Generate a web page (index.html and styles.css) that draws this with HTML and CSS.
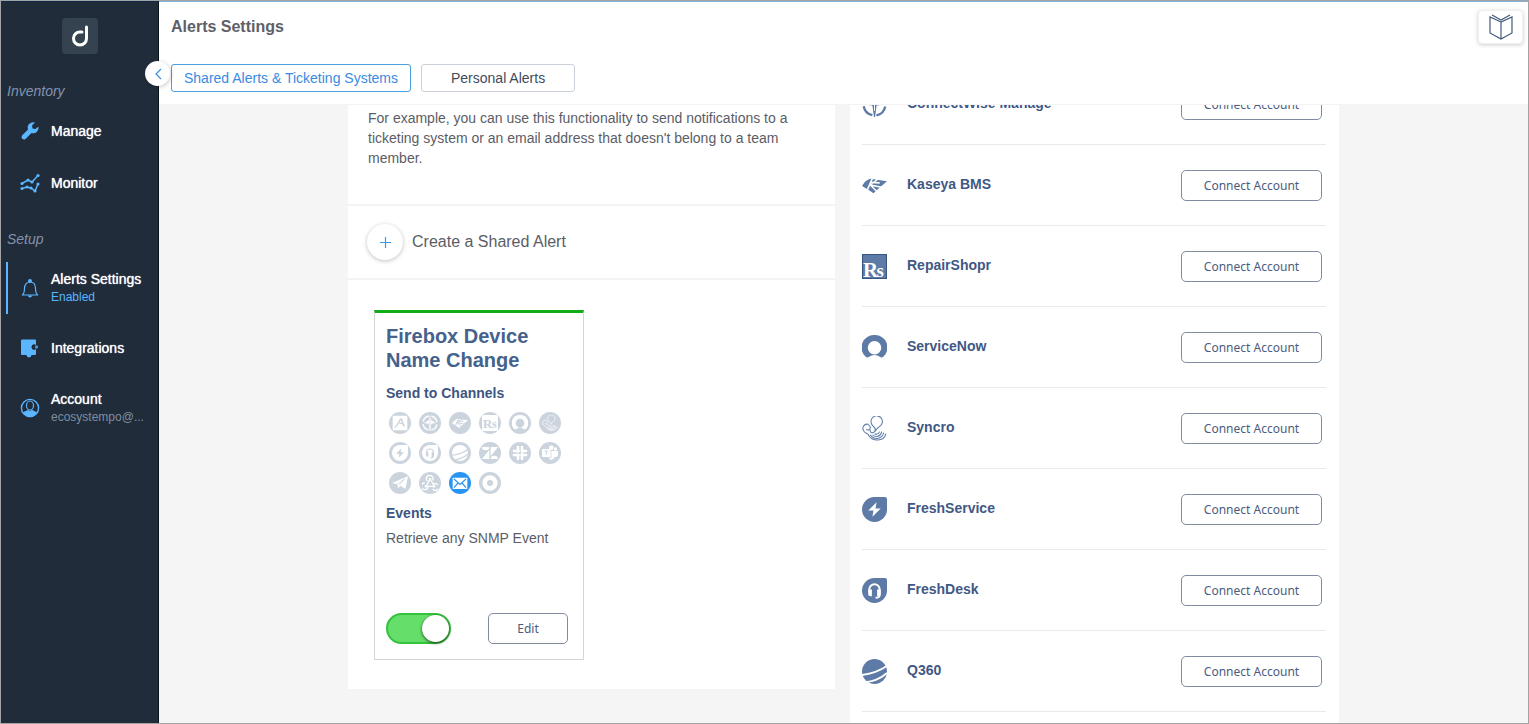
FILE: index.html
```
<!DOCTYPE html>
<html lang="en">
<head>
<meta charset="utf-8">
<title>Alerts Settings</title>
<link rel="stylesheet" href="styles.css">
</head>
<body>
<svg class="sprite" aria-hidden="true">
  <symbol id="autotask" viewBox="0 0 24 24"><rect x="1" y="1" width="22" height="22" rx="2" fill="currentColor"/><path d="M4 18c5 0 6-12 10-12l4 11M11 13c3-2 6 0 8 4" fill="none" stroke="var(--hole)" stroke-width="2"/></symbol>
  <symbol id="connectwise" viewBox="0 0 24 24"><circle cx="12" cy="12" r="10.500" fill="none" stroke="currentColor" stroke-width="2.200" stroke-dasharray="12.500 4" stroke-dashoffset="-2"/><path d="M12 0l2 8 7 4-7 1-1.500 11h-1L10 13l-7-1 7-4z" fill="currentColor"/><path d="M12 4v14" stroke="var(--hole)" stroke-width="1"/></symbol>
  <symbol id="kaseya" viewBox="0 0 24 24"><path d="M0 12.500Q3 7 8 5.500L24 8 17 14l-6 5.500L6 16z" fill="currentColor"/><path d="M10.500 4 5 16.500M17 4.500 8 11.500l12 2.500M8 11.500l7 7M9 9l8 .5" fill="none" stroke="var(--hole)" stroke-width="1.500"/></symbol>
  <symbol id="servicenow" viewBox="0 0 24 24"><path d="M12 0a12 12 0 0 0-8.500 20.900c.8.800 2 .9 3 .2a9.500 9.500 0 0 1 11 0c1 .7 2.200.6 3-.2A12 12 0 0 0 12 0zm0 18.700a6.500 6.500 0 1 1 0-13 6.500 6.500 0 0 1 0 13z" fill="currentColor"/></symbol>
  <symbol id="syncro" viewBox="0 0 24 24"><g fill="none" stroke="currentColor" stroke-width="1"><path d="M12 14c2-1 0-3-2-5a5.500 5.500 0 1 1 7 1c-3 1-3 4-5 5-2 2-5 1-4-2"/><path d="M6 8a4 4 0 0 0-4.500 6c1 2.500 3 2.500 5 4M4 13c2 1 4 0 4-2s-2-2-2-3"/><path d="M6 18c4 7 15 7 17-1M8 18c3 5 11 5 13-2M10 18c3 3 8 2 9-3M12 17c2 1 4 0 5-2"/></g></symbol>
  <symbol id="freshservice" viewBox="0 0 24 24"><path d="M12 0h10a2 2 0 0 1 2 2v10A12 12 0 1 1 12 0z" fill="currentColor"/><path d="M14 5 6 13h5l-1 6 8-8h-5z" fill="var(--hole)"/></symbol>
  <symbol id="freshdesk" viewBox="0 0 24 24"><path d="M12 0h10a2 2 0 0 1 2 2v10A12 12 0 1 1 12 0z" fill="currentColor"/><path d="M7 14v-3a5 5 0 0 1 10 0v5q0 3-4 3" fill="none" stroke="var(--hole)" stroke-width="1.800"/><path d="M6 11h3.500v6.500H8q-2 0-2-2zM14.500 11H18v4.500q0 2-2 2h-1.500z" fill="var(--hole)"/></symbol>
  <symbol id="q360" viewBox="0 0 24 24"><circle cx="12" cy="12" r="12" fill="currentColor"/><path d="M-1 15.500Q14 14 25 6M2 22.500q13-1 22-9" fill="none" stroke="var(--hole)" stroke-width="1.800"/></symbol>
  <symbol id="zendesk" viewBox="0 0 24 24"><path d="M0 3h11a5.500 5 0 0 1-11 0zM11 7v14H0zM13 3h11L13 17zM13 21a5.500 5 0 0 1 11 0z" fill="currentColor"/></symbol>
  <symbol id="slack" viewBox="0 0 24 24"><path d="M9 3v7M3 9h7M21 9h-6M15 3v7M9 21v-6M3 15h7M15 21v-7M21 15h-7" fill="none" stroke="currentColor" stroke-width="4" stroke-linecap="round"/></symbol>
  <symbol id="teams" viewBox="0 0 24 24"><rect x="0" y="6" width="13" height="12" rx="1" fill="currentColor"/><circle cx="14" cy="4" r="3.500" fill="currentColor"/><circle cx="20" cy="6" r="2.500" fill="currentColor"/><path d="M14 9h10v6q0 3-3 3h-2q-1 4-5 4-3 0-4-3h4z" fill="currentColor"/><path d="M4 9h5M6.500 9v6" stroke="var(--hole)" stroke-width="1.500"/></symbol>
  <symbol id="telegram" viewBox="0 0 24 24"><path d="M0 12 24 2l-4 19-7-5-4 4-1-6z" fill="currentColor"/><path d="M8 14 19 6l-8 9" fill="none" stroke="var(--hole)" stroke-width="1.200"/></symbol>
  <symbol id="webhook" viewBox="0 0 24 24"><g fill="none" stroke="currentColor" stroke-width="2"><path d="M8 9a5 5 0 1 1 8-1M12 6l5 8a5 5 0 1 1-1 7M18 17H9a5 5 0 1 1-5-5M12 6 7 16"/></g><g fill="currentColor"><circle cx="12" cy="6" r="2"/><circle cx="6" cy="17" r="2"/><circle cx="18" cy="17" r="2"/></g></symbol>
  <symbol id="email" viewBox="0 0 24 24"><rect x="1" y="4" width="22" height="17" rx="1" fill="currentColor"/><path d="m3 6 9 8 9-8M3 19l6-7M21 19l-6-7" fill="none" stroke="var(--hole)" stroke-width="1.800"/></symbol>
  <symbol id="ring" viewBox="0 0 24 24"><circle cx="12" cy="12" r="8" fill="none" stroke="currentColor" stroke-width="7"/></symbol>
</svg>

<div class="app">
  <nav class="sidebar" aria-label="Main">
    <div class="logo">
      <svg width="36" height="36" viewBox="0 0 36 36" role="img" aria-label="Logo"><path d="M24.500 9v11.500a6.500 6.500 0 1 1-6.500-6.500h2" fill="none" stroke="#fff" stroke-width="3" stroke-linecap="round"/></svg>
    </div>
    <button class="collapse" aria-label="Collapse menu"><svg width="8" height="14" viewBox="0 0 8 14"><path d="M7 2 2 7l5 5" fill="none" stroke="#3a8fe0" stroke-width="1.200"/></svg></button>

    <h2 class="nav-title">Inventory</h2>
    <div class="nav-group">
      <a class="nav-item" href="#manage">
        <svg class="nav-icon" viewBox="0 0 20 20"><path d="M18.500 5.500 15.500 8 12.500 7.500 12 4.500 15 1.500a5.500 5.500 0 0 0-7 7L2 14.500a2.500 2.500 0 0 0 3.500 3.500l6-6a5.500 5.500 0 0 0 7-6.500z" fill="#5bb5ff"/></svg>
        <span class="nav-label">Manage</span>
      </a>
      <a class="nav-item" href="#monitor">
        <svg class="nav-icon" viewBox="0 0 20 20"><g fill="none" stroke="#5bb5ff" stroke-width="1.500"><path d="M2 10.500 8 7l4 2 6-6.500M2 15.500l5-1.500 4 1 4 3 3-7"/></g><g fill="#5bb5ff"><circle cx="2" cy="10.500" r="1.600"/><circle cx="8" cy="7" r="1.600"/><circle cx="12" cy="9" r="1.600"/><circle cx="18" cy="2.500" r="1.600"/><circle cx="2" cy="15.500" r="1.600"/><circle cx="7" cy="14" r="1.600"/><circle cx="11" cy="15" r="1.600"/><circle cx="15" cy="18" r="1.600"/><circle cx="18" cy="11" r="1.600"/></g></svg>
        <span class="nav-label">Monitor</span>
      </a>
    </div>

    <h2 class="nav-title">Setup</h2>
    <div class="nav-group spaced">
      <a class="nav-item active" href="#alerts" aria-current="page">
        <svg class="nav-icon" viewBox="0 0 20 20"><path d="M2 17c2-1 2.500-3 2.500-6.500C4.500 6 7 4 10 4s5.500 2 5.500 6.500c0 3.500.5 5.500 2.500 6.500z" fill="none" stroke="#5bb5ff" stroke-width="1.200"/><circle cx="10" cy="3" r="2" fill="#5bb5ff"/><path d="M7.500 17.500h5q-2.500 4-5 0z" fill="#5bb5ff"/></svg>
        <span class="nav-text"><span class="nav-label">Alerts Settings</span><span class="nav-sub on">Enabled</span></span>
      </a>
      <a class="nav-item" href="#integrations">
        <svg class="nav-icon" viewBox="0 0 20 20"><path d="M2 1.500h13q1 0 1 1V7a2.700 2.700 0 1 0 0 4v5q0 1-1 1h-3.500a2.500 2.500 0 0 1-5 0H2q-1 0-1-1V2.500q0-1 1-1z" fill="#5bb5ff"/><circle cx="16.500" cy="9" r="1.700" fill="#4795d8"/></svg>
        <span class="nav-label">Integrations</span>
      </a>
      <a class="nav-item" href="#account">
        <svg class="nav-icon" viewBox="0 0 20 20"><circle cx="10" cy="10" r="8.600" fill="none" stroke="#5bb5ff" stroke-width="1.400"/><ellipse cx="10" cy="7.500" rx="3.500" ry="4.500" fill="none" stroke="#5bb5ff" stroke-width="1.200"/><path d="M3 15c1-2 3.500-2 5-3 1 1 3 1 4 0 1.500 1 4 1 5 3q-7 8-14 0z" fill="#5bb5ff"/></svg>
        <span class="nav-text"><span class="nav-label">Account</span><span class="nav-sub">ecosystempo@...</span></span>
      </a>
    </div>
  </nav>

  <main class="main">
    <header class="header">
      <div class="header-top">
        <h1 class="title">Alerts Settings</h1>
        <button class="docs" aria-label="Documentation"><svg width="24" height="26" viewBox="0 0 24 26"><path d="M12 8 1 3v16l11 6 11-6V3zv17M3 1l9 5 9-5" fill="none" stroke="#435a7d" stroke-width="1.200"/></svg></button>
      </div>
      <div class="tabs">
        <button class="tab selected">Shared Alerts &amp; Ticketing Systems</button>
        <button class="tab personal">Personal Alerts</button>
      </div>
    </header>

    <div class="content">
      <section class="panel">
        <p class="intro">For example, you can use this functionality to send notifications to a ticketing system or an email address that doesn't belong to a team member.</p>
        <div class="create">
          <button class="add" id="add" aria-labelledby="add-label"><svg width="11" height="11" viewBox="0 0 11 11"><path d="M5.500 0v11M0 5.500h11" stroke="#3b9bea" stroke-width="1.200"/></svg></button>
          <label id="add-label" for="add">Create a Shared Alert</label>
        </div>
        <div class="alerts">
          <article class="card">
            <h2 class="card-title">Firebox Device Name Change</h2>
            <h3 class="card-sub">Send to Channels</h3>
            <div class="channels">
              <span class="channel"><svg><use href="#autotask"/></svg></span>
              <span class="channel"><svg><use href="#connectwise"/></svg></span>
              <span class="channel"><svg><use href="#kaseya"/></svg></span>
              <span class="channel"><svg viewBox="0 0 24 24"><rect width="24" height="24" rx="2" fill="currentColor"/><text x="1" y="20" class="rs-big">R</text><text x="15" y="20" class="rs-small">s</text></svg></span>
              <span class="channel"><svg><use href="#servicenow"/></svg></span>
              <span class="channel"><svg><use href="#syncro"/></svg></span>
              <span class="channel"><svg><use href="#freshservice"/></svg></span>
              <span class="channel"><svg><use href="#freshdesk"/></svg></span>
              <span class="channel"><svg><use href="#q360"/></svg></span>
              <span class="channel"><svg><use href="#zendesk"/></svg></span>
              <span class="channel"><svg><use href="#slack"/></svg></span>
              <span class="channel"><svg><use href="#teams"/></svg></span>
              <span class="channel"><svg><use href="#telegram"/></svg></span>
              <span class="channel"><svg><use href="#webhook"/></svg></span>
              <span class="channel enabled"><svg><use href="#email"/></svg></span>
              <span class="channel"><svg><use href="#ring"/></svg></span>
            </div>
            <h3 class="card-sub">Events</h3>
            <p class="event">Retrieve any SNMP Event</p>
            <div class="card-foot">
              <input class="switch" type="checkbox" checked aria-label="Alert enabled">
              <button class="btn edit">Edit</button>
            </div>
          </article>
        </div>
      </section>

      <ul class="accounts">
        <li class="account"><svg class="brand"><use href="#connectwise"/></svg><span class="name">ConnectWise Manage</span><button class="btn">Connect Account</button></li>
        <li class="account"><svg class="brand"><use href="#kaseya"/></svg><span class="name">Kaseya BMS</span><button class="btn">Connect Account</button></li>
        <li class="account"><svg class="brand" viewBox="0 0 24 24"><rect x="0.500" y="0.500" width="23" height="23" fill="currentColor" stroke="#365580"/><text x="1" y="22" class="rs-big">R</text><text x="14" y="22" class="rs-small">s</text></svg><span class="name">RepairShopr</span><button class="btn">Connect Account</button></li>
        <li class="account"><svg class="brand"><use href="#servicenow"/></svg><span class="name">ServiceNow</span><button class="btn">Connect Account</button></li>
        <li class="account"><svg class="brand"><use href="#syncro"/></svg><span class="name">Syncro</span><button class="btn">Connect Account</button></li>
        <li class="account"><svg class="brand"><use href="#freshservice"/></svg><span class="name">FreshService</span><button class="btn">Connect Account</button></li>
        <li class="account"><svg class="brand"><use href="#freshdesk"/></svg><span class="name">FreshDesk</span><button class="btn">Connect Account</button></li>
        <li class="account"><svg class="brand"><use href="#q360"/></svg><span class="name">Q360</span><button class="btn">Connect Account</button></li>
        <li class="account"></li>
      </ul>
    </div>
  </main>
</div>
</body>
</html>
```
FILE: styles.css
```
* { box-sizing: border-box; }
body { margin: 0; font-family: "Liberation Sans", Arial, sans-serif; font-size: 14px; color: #5b5d66; }
h1, h2, h3, p, ul { margin: 0; padding: 0; }
button { font: inherit; background: #fff; cursor: pointer; }
.sprite { position: absolute; width: 0; height: 0; }

.app { display: flex; height: 100vh; border: 1px solid #a3a3a3; overflow: hidden; }

.sidebar { position: relative; z-index: 1; flex: none; width: 158px; background: #202c3a; border-top: 1px solid #0d2a4c; border-right: 1px solid #0c121a; padding-top: 16px; }
.logo { width: 36px; height: 36px; margin: 0 auto; border-radius: 4px; background: #35424f; }
.collapse { position: absolute; top: 59px; right: -12px; width: 25px; height: 25px; padding: 0; border: 0; border-radius: 50%; display: flex; align-items: center; justify-content: center; box-shadow: 1px 1px 4px rgba(0, 0, 0, .2); }
.nav-title { padding: 0 6px; line-height: 20px; font-size: 14px; font-weight: 400; font-style: italic; color: #8592ac; margin-top: 27px; }
.nav-group { display: flex; flex-direction: column; margin-top: 4px; }
.nav-group + .nav-title { margin-top: 20px; }
.nav-group.spaced { gap: 8px; margin-top: 13px; }
.nav-item { display: flex; align-items: center; gap: 11px; height: 52px; margin-left: 5px; padding-left: 12px; border-left: 2px solid transparent; text-decoration: none; }
.nav-item.active { border-color: #5bb5ff; }
.nav-icon { flex: none; width: 20px; height: 20px; }
.nav-text { display: flex; flex-direction: column; }
.nav-label { line-height: 18px; color: #fff; text-shadow: 0 0 1px #fff; }
.nav-sub { font-size: 12px; line-height: 18px; color: #7f8da0; white-space: nowrap; }
.nav-sub.on { color: #5bb5ff; }

.main { flex: 1; min-width: 0; display: flex; flex-direction: column; border-top: 1px solid #7fb2dc; background: #f5f5f5; }
.header { flex: none; background: #fff; padding: 8px 5px 12px 12px; }
.header-top { display: flex; justify-content: space-between; align-items: flex-start; height: 54px; }
.title { font-size: 16px; line-height: 34px; font-weight: 700; color: #5f5f69; }
.docs { width: 45px; height: 34px; padding: 0; border: 1px solid #f0f0f0; border-radius: 4px; display: flex; align-items: center; justify-content: center; box-shadow: 0 1px 4px rgba(0, 0, 0, .2); }
.tabs { display: flex; gap: 10px; }
.tab { height: 28px; padding: 0 12px; border: 1px solid #ccd2da; border-radius: 3px; color: #3f4a60; line-height: 26px; }
.tab.selected { border-color: #4a9fe0; color: #3a8be0; }
.tab.personal { padding: 0 29px; }

.content { flex: 1; min-height: 0; overflow: hidden; display: flex; justify-content: center; align-items: flex-start; gap: 15px; border-top: 1px solid #f3f3f3; }
.panel { flex: 0 1 487px; background: #fff; }
.intro { padding: 3px 20px 36px; line-height: 20px; }
.create { display: flex; align-items: center; gap: 9px; padding: 18px 19px; border-top: 2px solid #f3f3f3; border-bottom: 2px solid #f3f3f3; font-size: 16px; }
.add { width: 36px; height: 36px; padding: 0; border: 0; border-radius: 50%; display: flex; align-items: center; justify-content: center; box-shadow: 0 1px 4px rgba(0, 0, 0, .25); }
.alerts { padding: 30px 26px 29px; }
.card { width: 210px; border: 1px solid #d3d5d8; border-top: 3px solid #12ac18; padding: 11px 15px 15px 11px; }
.card-title { font-size: 20px; line-height: 24px; color: #45628c; }
.card-sub { font-size: 14px; line-height: 20px; margin-top: 11px; color: #3d5580; }
.channels { display: grid; grid-template-columns: repeat(6, 22px); gap: 8px; margin: 9px 0 0 3px; }
.channel { --hole: #cbd4dd; display: flex; align-items: center; justify-content: center; width: 22px; height: 22px; border-radius: 50%; background: #cbd4dd; color: #fff; }
.channel svg { width: 16px; height: 16px; }
.channel.enabled { background: #2994f4; --hole: #2994f4; }
.channels + .card-sub { margin-top: 9px; }
.event { line-height: 20px; margin-top: 5px; }
.card-foot { display: flex; justify-content: space-between; align-items: center; margin-top: 65px; }
.switch { appearance: none; width: 65px; height: 31px; margin: 0; border: 2px solid #35c23d; border-radius: 16px; background: #65df69; display: flex; justify-content: flex-end; }
.switch::before { content: ""; width: 27px; height: 27px; border-radius: 50%; background: #fff; box-shadow: 0 1px 3px rgba(0, 0, 0, .7); }

.accounts { flex: 0 1 489px; list-style: none; background: #fff; margin-top: -41px; padding: 0 13px 0 12px; }
.account { display: flex; align-items: center; height: 81px; padding-right: 4px; border-bottom: 1px solid #e9eaec; }
.brand { --hole: #fff; width: 25px; height: 25px; color: #5d7ba6; }
.name { flex: 1; margin-left: 20px; padding-bottom: 2px; font-weight: 700; color: #3f5884; }
.btn { width: 141px; height: 31px; padding: 0; border: 1px solid #7e8ba0; border-radius: 5px; font-family: "Noto Sans", sans-serif; font-size: 12px; color: #4b5c7e; }
.btn.edit { width: 80px; }
.rs-big, .rs-small { font-family: "Liberation Serif", serif; font-weight: 700; fill: var(--hole); }
.rs-big { font-size: 20px; }
.rs-small { font-size: 18px; }
```
